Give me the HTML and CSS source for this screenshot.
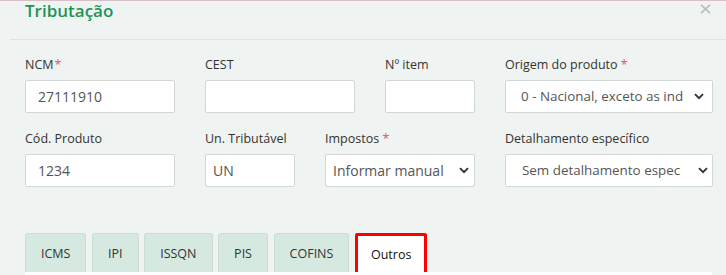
FILE: index.html
```html
<!DOCTYPE html>
<html lang="pt-BR">
<head>
<meta charset="utf-8">
<title>Tributação</title>
<link rel="stylesheet" href="styles.css">
</head>
<body>
<div class="modal">
  <div class="modal-header">
    <h2 class="title">Tributação</h2>
    <button class="close" aria-label="Fechar">
      <svg width="11" height="10" viewBox="0 0 11 10"><path d="M1 0.8 L10 9.2 M10 0.8 L1 9.2" stroke="#b9bdbc" stroke-width="1.7" fill="none"/></svg>
    </button>
  </div>
  <div class="modal-body">
    <div class="row">
      <div class="field w150">
        <label class="label">NCM<span class="req tight">*</span></label>
        <div class="input">27111910</div>
      </div>
      <div class="field w150">
        <label class="label">CEST</label>
        <div class="input"></div>
      </div>
      <div class="field w90">
        <label class="label">Nº item</label>
        <div class="input"></div>
      </div>
      <div class="field w208">
        <label class="label">Origem do produto <span class="req">*</span></label>
        <div class="select origem">
          <span class="select-text">0 - Nacional, exceto as indicadas nos códigos 3, 4, 5 e 8</span>
          <svg class="chev" width="10" height="7" viewBox="0 0 10 7"><path d="M1 1.2 L5 5.2 L9 1.2" stroke="#333" stroke-width="1.9" fill="none"/></svg>
        </div>
      </div>
    </div>
    <div class="row row2">
      <div class="field w150">
        <label class="label">Cód. Produto</label>
        <div class="input">1234</div>
      </div>
      <div class="field w90">
        <label class="label">Un. Tributável</label>
        <div class="input narrow">UN</div>
      </div>
      <div class="field w150">
        <label class="label">Impostos <span class="req">*</span></label>
        <div class="select impostos">
          <span class="select-text">Informar manual</span>
          <svg class="chev" width="10" height="7" viewBox="0 0 10 7"><path d="M1 1.2 L5 5.2 L9 1.2" stroke="#333" stroke-width="1.9" fill="none"/></svg>
        </div>
      </div>
      <div class="field w208">
        <label class="label">Detalhamento específico</label>
        <div class="select detal">
          <span class="select-text">Sem detalhamento específico</span>
          <svg class="chev" width="10" height="7" viewBox="0 0 10 7"><path d="M1 1.2 L5 5.2 L9 1.2" stroke="#333" stroke-width="1.9" fill="none"/></svg>
        </div>
      </div>
    </div>
    <div class="tabs">
      <div class="tab">ICMS</div>
      <div class="tab">IPI</div>
      <div class="tab">ISSQN</div>
      <div class="tab">PIS</div>
      <div class="tab">COFINS</div>
      <div class="tab active">Outros</div>
    </div>
    <div class="panel"></div>
  </div>
</div>
</body>
</html>
```

FILE: styles.css
```css
html, body {
  margin: 0;
  padding: 0;
  overflow: hidden;
}
body {
  background: #eff4f2;
  font-family: "Open Sans", "Noto Sans", sans-serif;
  color: #333;
}
.modal {
  border-top: 1px solid #d7bfc8;
}
.modal-header {
  display: flex;
  justify-content: space-between;
  align-items: flex-start;
  height: 38px;
  margin-left: 10px;
  padding-left: 15px;
  padding-right: 15px;
  border-bottom: 1px solid #dde3e1;
}
.title {
  margin: -2px 0 0 0;
  font-size: 17px;
  line-height: 23px;
  font-weight: 600;
  color: #1f9356;
}
.close {
  border: 0;
  background: none;
  padding: 0;
  margin-top: 3px;
  width: 11px;
  height: 10px;
  display: flex;
}
.modal-body {
  padding: 16px 13px 0 25px;
}
.row {
  display: flex;
  gap: 30px;
}
.row2 {
  margin-top: 17px;
}
.field {
  display: flex;
  flex-direction: column;
}
.w150 { width: 150px; }
.w90 { width: 90px; }
.w208 { width: 208px; }
.label {
  font-size: 12.5px;
  line-height: 17px;
  color: #333;
  margin-bottom: 7px;
}
.req {
  color: #e8545a;
}
.req.tight {
  margin-left: 1px;
}
.input, .select {
  box-sizing: border-box;
  height: 33px;
  background: #fff;
  border: 1px solid #d2d6d5;
  border-radius: 2px;
  font-size: 14px;
  line-height: 31px;
  color: #555;
  padding: 0 12px;
}
.input.narrow {
  padding-left: 7px;
}
.select {
  display: flex;
  align-items: center;
}
.select-text {
  flex: 1;
  overflow: hidden;
  white-space: nowrap;
}
.select.origem {
  padding-left: 15px;
  padding-right: 8px;
  font-size: 13.4px;
}
.select.origem .select-text { margin-right: 10px; }
.select.impostos {
  padding-left: 7px;
  padding-right: 5px;
}
.select.detal {
  padding-left: 16px;
  padding-right: 4px;
  font-size: 13.4px;
}
.select.detal .select-text { margin-right: 17px; }
.chev {
  flex: none;
}
.tabs {
  display: flex;
  gap: 5.6px;
  margin-top: 46px;
  height: 39px;
}
.tab {
  box-sizing: border-box;
  height: 39px;
  padding: 0 15px;
  border: 1px solid #c9ddd3;
  border-bottom: 0;
  border-radius: 3px 3px 0 0;
  background: #d6e9e0;
  font-size: 12.5px;
  line-height: 39px;
  color: #333;
}
.tab.active {
  background: #fff;
  border: 3px solid #ff0000;
  border-bottom: 0;
  padding: 0 13px;
  line-height: 37px;
  color: #111;
}
.panel {
  height: 10px;
  width: 687px;
  background: #fff;
}
```
